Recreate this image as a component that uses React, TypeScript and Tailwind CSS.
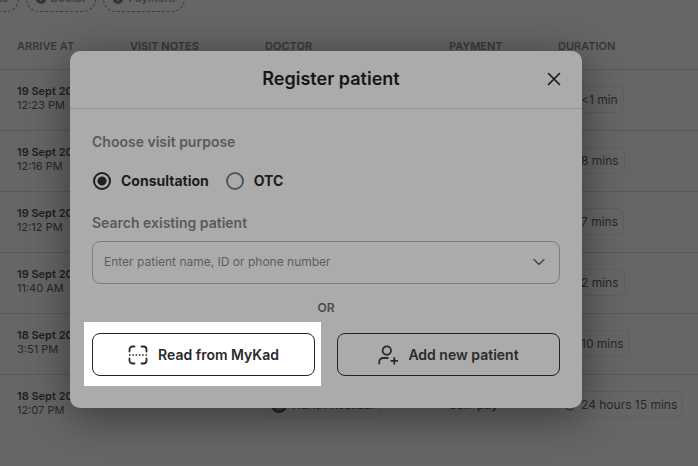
import { useState } from "react";

type Visit = {
  date: string;
  time: string;
  duration: string;
  doctor?: string;
  payment?: string;
};

const visits: Visit[] = [
  { date: "19 Sept 2023", time: "12:23 PM", duration: "<1 min" },
  { date: "19 Sept 2023", time: "12:16 PM", duration: "8 mins" },
  { date: "19 Sept 2023", time: "12:12 PM", duration: "7 mins" },
  { date: "19 Sept 2023", time: "11:40 AM", duration: "2 mins" },
  { date: "18 Sept 2023", time: "3:51 PM", duration: "10 mins" },
  {
    date: "18 Sept 2023",
    time: "12:07 PM",
    duration: "24 hours 15 mins",
    doctor: "Harith Roslizal",
    payment: "Self-pay",
  },
];

function FilterChip({ label }: { label: string }) {
  return (
    <button
      type="button"
      className="flex h-[26px] shrink-0 items-center gap-[5px] rounded-full border border-dashed border-[#3c3c3c] px-[9px] text-[11px] font-semibold text-[#3f3f3f]"
    >
      <span className="flex size-[10px] items-center justify-center rounded-full bg-[#333]">
        <svg width="8" height="8" viewBox="0 0 8 8" stroke="#666" strokeWidth="1.2" aria-hidden="true">
          <path d="M4 1.5v5M1.5 4h5" />
        </svg>
      </span>
      {label}
    </button>
  );
}

function ClockIcon() {
  return (
    <svg width="12" height="12" viewBox="0 0 12 12" fill="none" stroke="#2a2a2a" aria-hidden="true">
      <circle cx="6" cy="6" r="5" />
      <path d="M6 3v3l2 1" />
    </svg>
  );
}

function ScanIcon() {
  return (
    <svg width="20" height="20" viewBox="0 0 20 20" fill="none" stroke="currentColor" strokeWidth="1.8" strokeLinecap="round" aria-hidden="true">
      <path d="M1.5 6.5V4.5a3 3 0 0 1 3-3h2M13.5 1.5h2a3 3 0 0 1 3 3v2M18.5 13.5v2a3 3 0 0 1-3 3h-2M6.5 18.5h-2a3 3 0 0 1-3-3v-2" />
      <path d="M1 10h18" strokeWidth="1.6" strokeLinecap="butt" strokeDasharray="1.6 1.68" />
    </svg>
  );
}

function AddUserIcon() {
  return (
    <svg width="20" height="20" viewBox="0 0 20 20" fill="none" stroke="currentColor" strokeWidth="1.8" strokeLinecap="round" strokeLinejoin="round" aria-hidden="true">
      <circle cx="8.8" cy="5.6" r="4.2" />
      <path d="M1.2 18.5v-1.5a4 4 0 0 1 4-4h4.6M16.3 12.8v6M13.3 15.8h6" />
    </svg>
  );
}

function Queue() {
  return (
    <div className="-mt-[15px]">
      <div className="flex h-[27px] items-center gap-[7px]">
        <div className="-ml-[41px]">
          <FilterChip label="Date" />
        </div>
        <FilterChip label="Doctor" />
        <FilterChip label="Payment" />
      </div>
      <table className="mt-3 w-full table-fixed text-left whitespace-nowrap text-[#262626]">
        <colgroup>
          <col className="w-[130px]" />
          <col className="w-[135px]" />
          <col className="w-[184px]" />
          <col className="w-[109px]" />
          <col />
        </colgroup>
        <thead>
          <tr className="h-[45px] border-b border-[#595959] text-[11px] text-[#383838]">
            <th className="pl-[17px] font-semibold">ARRIVE AT</th>
            <th className="font-semibold">VISIT NOTES</th>
            <th className="font-semibold">DOCTOR</th>
            <th className="font-semibold">PAYMENT</th>
            <th className="font-semibold">DURATION</th>
          </tr>
        </thead>
        <tbody>
          {visits.map((v) => (
            <tr key={v.date + v.time} className="h-[61px] border-b border-[#595959] last:border-0">
              <td className="pb-[3px] pl-[17px] text-[11px] leading-[14px]">
                <div className="font-semibold text-[#1f1f1f]">{v.date}</div>
                <div>{v.time}</div>
              </td>
              <td />
              <td>
                {v.doctor && (
                  <span className="inline-flex h-[27px] items-center gap-[5px] rounded-md border border-[#5f5f5f] px-[5px] text-[12px] font-medium">
                    <span className="size-4 rounded-full border-2 border-[#1b2233] bg-[#4a3a28]" />
                    {v.doctor}
                  </span>
                )}
              </td>
              <td className="text-[12px] font-semibold">{v.payment}</td>
              <td>
                <span className="inline-flex h-[27px] items-center gap-[5px] rounded-md border border-[#5f5f5f] px-[5px] text-[12px]">
                  <ClockIcon />
                  {v.duration}
                </span>
              </td>
            </tr>
          ))}
        </tbody>
      </table>
    </div>
  );
}

const radioClass =
  "size-[18px] appearance-none rounded-full border-2 border-[#555] checked:border-[#1f1f1f] checked:bg-[radial-gradient(circle,#1f1f1f_4px,transparent_5px)]";

const actionClass =
  "flex h-[43px] w-full items-center justify-center gap-[10px] rounded-lg border border-[#222] text-[14px] font-semibold text-[#2a2a2a]";

function RegisterPatient() {
  const [purpose, setPurpose] = useState("Consultation");

  return (
    <div
      role="dialog"
      aria-labelledby="register-title"
      className="w-full max-w-[512px] rounded-[10px] bg-[#ababab] shadow-[0_8px_44px_rgba(0,0,0,0.45)]"
    >
      <header className="relative flex h-[58px] items-center justify-center border-b border-[#939393] pb-[2px] pl-[10px]">
        <h2 id="register-title" className="text-[18px] font-semibold text-[#161616]">
          Register patient
        </h2>
        <button type="button" aria-label="Close" className="absolute right-5 text-[#161616]">
          <svg width="16" height="16" viewBox="0 0 16 16" fill="none" stroke="currentColor" strokeWidth="1.6" strokeLinecap="round" aria-hidden="true">
            <path d="M2.5 2.5l11 11M13.5 2.5l-11 11" />
          </svg>
        </button>
      </header>

      <div className="px-[22px] pt-[23px] pb-8">
        <fieldset>
          <legend className="text-[14px] leading-5 font-semibold text-[#5a5a5a]">Choose visit purpose</legend>
          <div className="mt-[19px] flex gap-[17px] pl-px text-[14px] leading-5 font-bold text-[#1c1c1c]">
            {["Consultation", "OTC"].map((option) => (
              <label key={option} className="flex items-center gap-[10px]">
                <input
                  type="radio"
                  name="purpose"
                  checked={purpose === option}
                  onChange={() => setPurpose(option)}
                  className={radioClass}
                />
                {option}
              </label>
            ))}
          </div>
        </fieldset>

        <label htmlFor="patient" className="mt-[22px] block text-[14px] leading-5 font-semibold text-[#5a5a5a]">
          Search existing patient
        </label>
        <div className="mt-2 flex h-[43px] items-center rounded-lg border border-[#7d7d7d] pr-[14px] pb-px pl-[11px]">
          <input
            id="patient"
            type="text"
            placeholder="Enter patient name, ID or phone number"
            className="min-w-0 flex-1 bg-transparent text-[12px] outline-none placeholder:text-[#5e5e5e]"
          />
          <button type="button" aria-label="Show patients" className="text-[#444]">
            <svg width="12" height="12" viewBox="0 0 12 12" fill="none" stroke="currentColor" strokeWidth="1.4" strokeLinecap="round" strokeLinejoin="round" aria-hidden="true">
              <path d="M1 3.5l5 5 5-5" />
            </svg>
          </button>
        </div>

        <p className="mt-4 text-center text-[12px] leading-4 font-semibold text-[#4c4c4c]">OR</p>

        <div className="mt-[17px] grid grid-cols-2 gap-[22px]">
          <div className="-mt-[11px] -mr-[6px] -mb-[10px] -ml-2 bg-white pt-[11px] pr-[6px] pb-[10px] pl-2">
            <button type="button" className={actionClass}>
              <ScanIcon />
              Read from MyKad
            </button>
          </div>
          <button type="button" className={actionClass}>
            <AddUserIcon />
            Add new patient
          </button>
        </div>
      </div>
    </div>
  );
}

export default function App() {
  return (
    <div className="relative flex h-screen flex-col overflow-hidden bg-[#666] font-['Inter','Liberation_Sans',sans-serif]">
      <Queue />
      <div className="absolute inset-0 flex items-start justify-center pt-[51px] pr-[46px]">
        <RegisterPatient />
      </div>
    </div>
  );
}
